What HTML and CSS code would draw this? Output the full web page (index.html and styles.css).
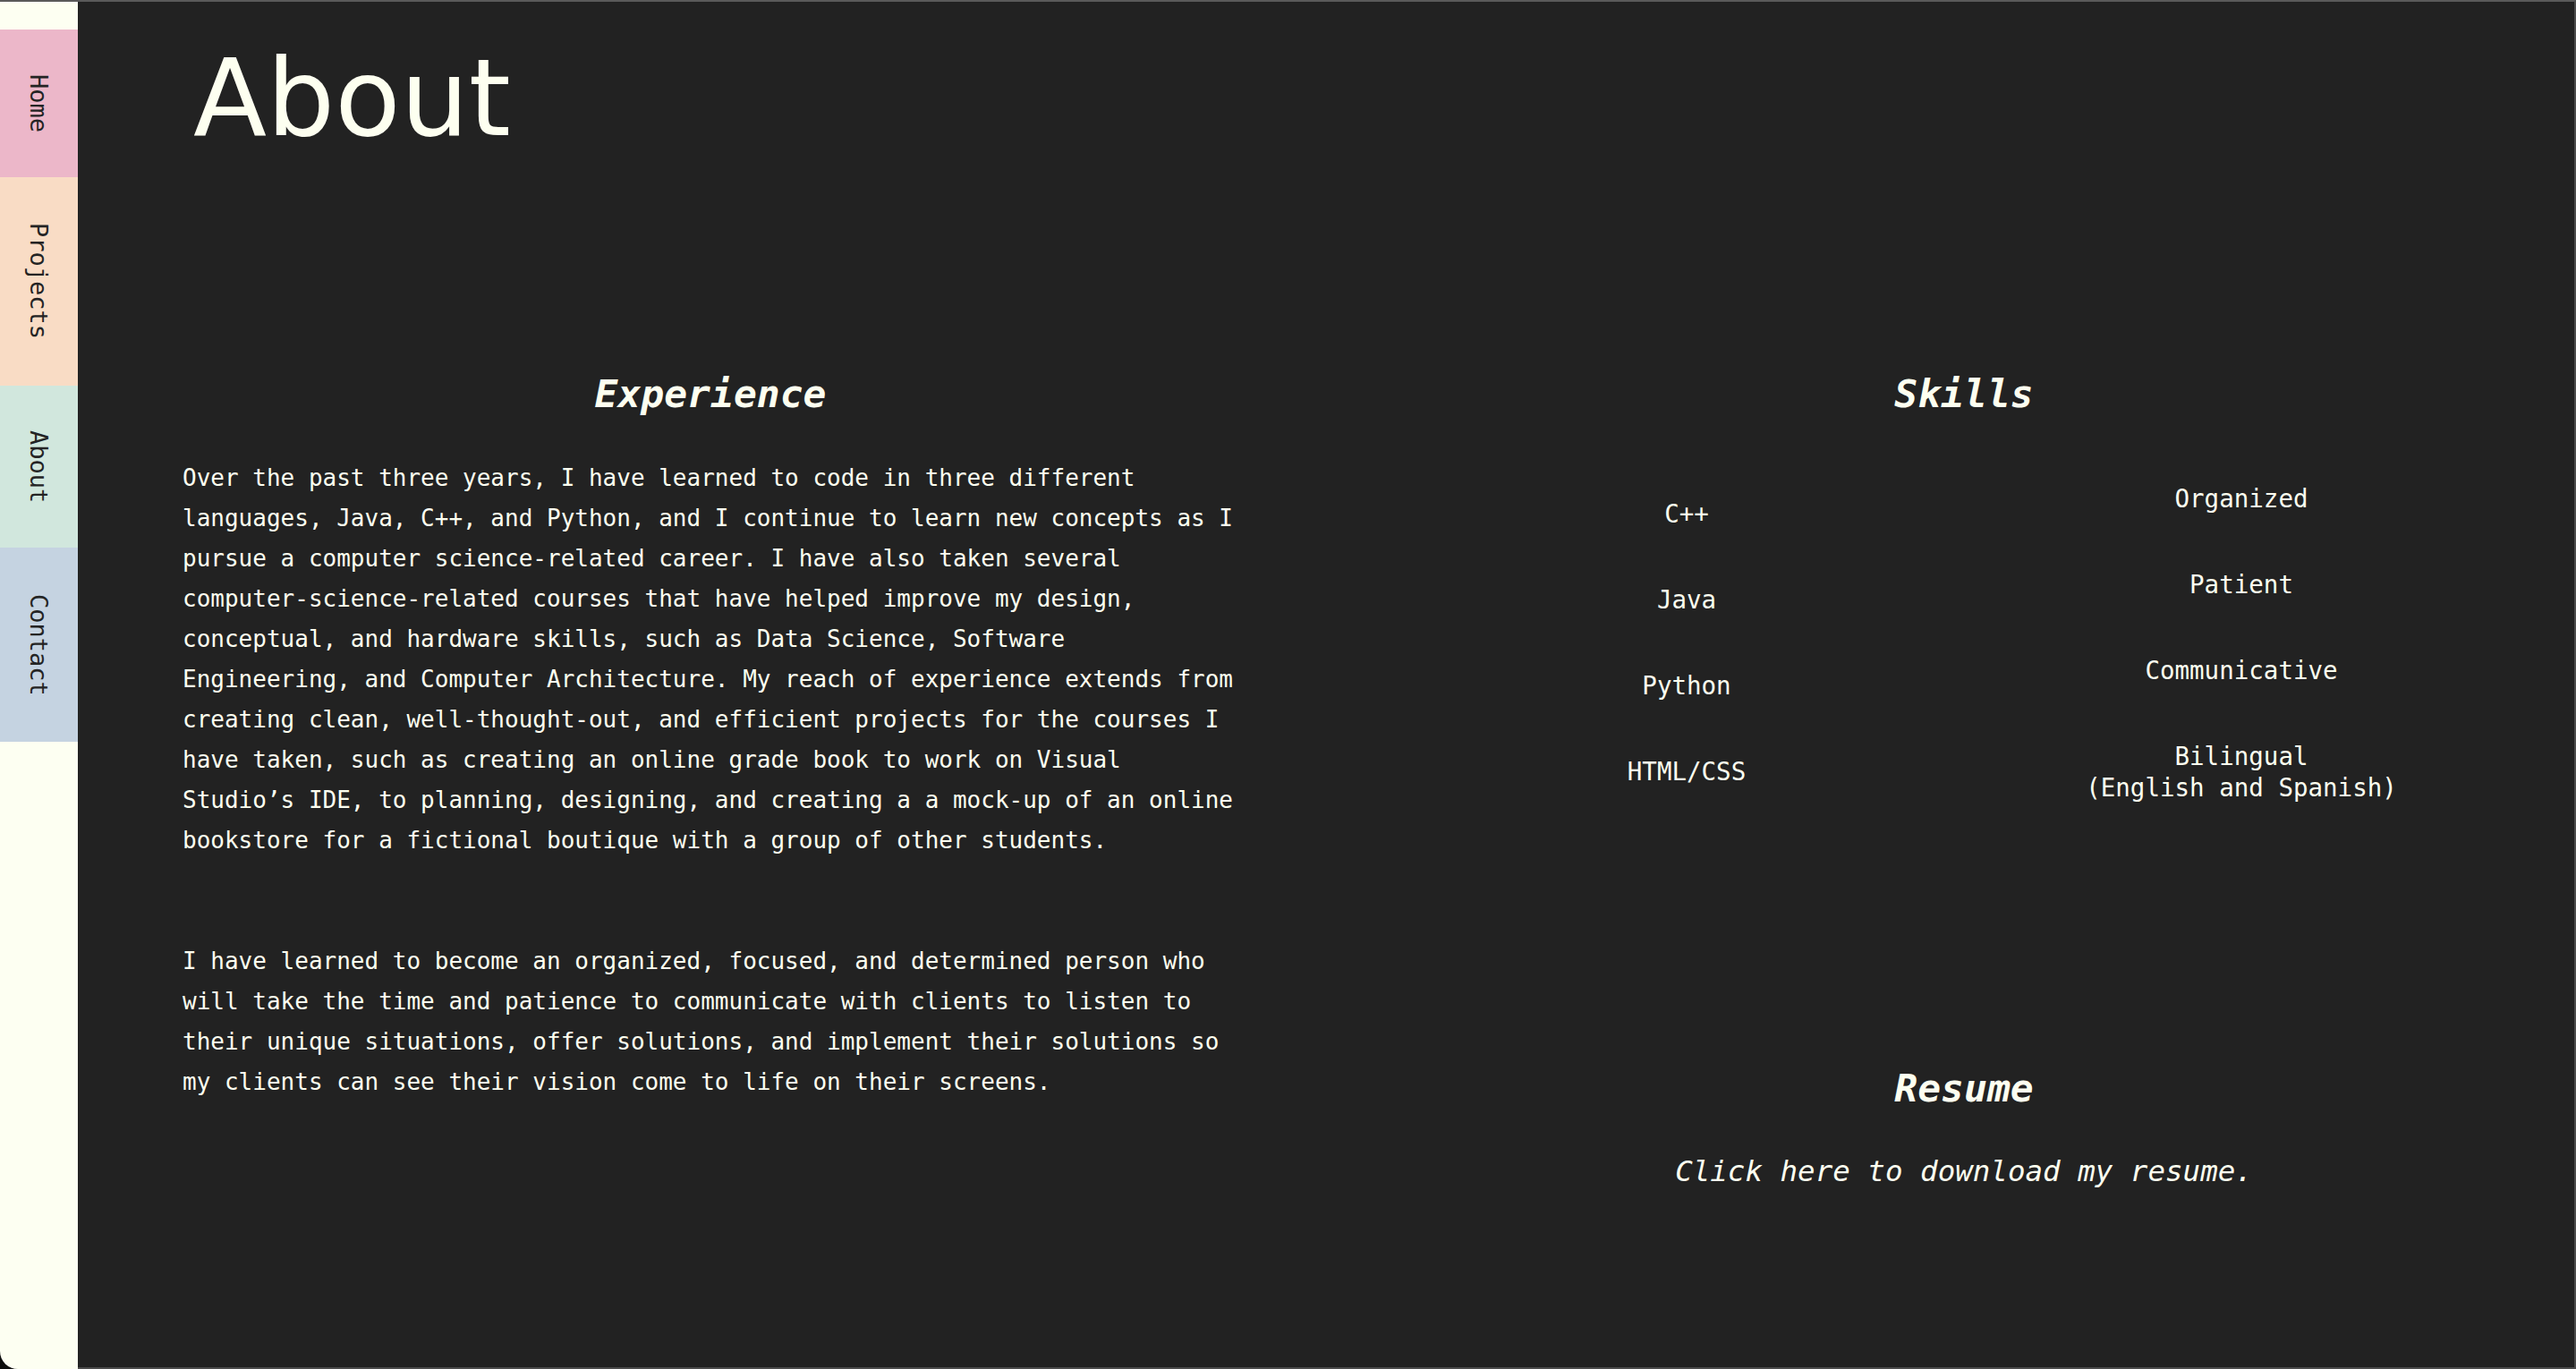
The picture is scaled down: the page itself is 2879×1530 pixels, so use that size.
FILE: index.html
```html
<!DOCTYPE html>
<html lang="en">
<head>
<meta charset="utf-8">
<title>About</title>
<link rel="stylesheet" href="styles.css">
</head>
<body>
<div class="window">
  <nav class="sidebar">
    <a class="tab tab-home" href="#">Home</a>
    <a class="tab tab-projects" href="#">Projects</a>
    <a class="tab tab-about" href="#">About</a>
    <a class="tab tab-contact" href="#">Contact</a>
  </nav>
  <main class="main">
    <h1 class="page-title">About</h1>
    <div class="columns">
      <section class="col">
        <h2 class="section-title">Experience</h2>
        <p class="text">Over the past three years, I have learned to code in three different languages, Java, C++, and Python, and I continue to learn new concepts as I pursue a computer science-related career. I have also taken several computer-science-related courses that have helped improve my design, conceptual, and hardware skills, such as Data Science, Software Engineering, and Computer Architecture. My reach of experience extends from creating clean, well-thought-out, and efficient projects for the courses I have taken, such as creating an online grade book to work on Visual Studio’s IDE, to planning, designing, and creating a a mock-up of an online bookstore for a fictional boutique with a group of other students.</p>
        <p class="text text-gap">I have learned to become an organized, focused, and determined person who will take the time and patience to communicate with clients to listen to their unique situations, offer solutions, and implement their solutions so my clients can see their vision come to life on their screens.</p>
      </section>
      <section class="col">
        <h2 class="section-title">Skills</h2>
        <div class="skills">
          <ul class="skill-list">
            <li>C++</li>
            <li>Java</li>
            <li>Python</li>
            <li>HTML/CSS</li>
          </ul>
          <ul class="skill-list">
            <li>Organized</li>
            <li>Patient</li>
            <li>Communicative</li>
            <li>Bilingual<br>(English and Spanish)</li>
          </ul>
        </div>
        <h2 class="section-title resume-title">Resume</h2>
        <a class="resume-link" href="#">Click here to download my resume.</a>
      </section>
    </div>
  </main>
</div>
</body>
</html>
```

FILE: styles.css
```css
html, body {
  margin: 0;
  padding: 0;
  background: #0d0d0d;
}

.window {
  box-sizing: border-box;
  width: 2879px;
  height: 1530px;
  display: flex;
  background: #222222;
  border-top: 2px solid #5a5a5a;
  border-right: 2px solid #4c4c4c;
  border-bottom-left-radius: 20px;
  overflow: hidden;
}

.sidebar {
  width: 87px;
  flex: none;
  background: #fdfff2;
  padding-top: 31px;
  display: flex;
  flex-direction: column;
}

.tab {
  display: flex;
  align-items: center;
  justify-content: center;
  writing-mode: vertical-rl;
  font-family: "DejaVu Sans Mono", monospace;
  font-size: 27px;
  color: #242424;
  text-decoration: none;
}

.tab-home { height: 165px; background: #ecb7c9; }
.tab-projects { height: 233px; background: #f9dcc5; }
.tab-about { height: 181px; background: #d1e7dd; }
.tab-contact { height: 217px; background: #c5d3e1; }

.main {
  flex: 1;
  box-sizing: border-box;
  padding: 0 92px 0 117px;
  border-bottom: 2px solid #4c4c4c;
  color: #fdfff0;
  font-family: "DejaVu Sans Mono", monospace;
}

.page-title {
  margin: 48px 0 0 12px;
  font-family: "DejaVu Sans", sans-serif;
  font-weight: 400;
  font-size: 120px;
  line-height: 1;
  color: #fdfff0;
}

.columns {
  margin-top: 245px;
  display: grid;
  grid-template-columns: 1180px 1180px;
  column-gap: 221px;
}

.col {
  display: flex;
  flex-direction: column;
  align-items: center;
}

.section-title {
  margin: 0;
  font-size: 43px;
  line-height: 1.2;
  font-style: italic;
  font-weight: 700;
  text-align: center;
}

.text {
  align-self: stretch;
  margin: 45px 0 0;
  font-size: 26px;
  line-height: 45px;
}

.text-gap {
  margin-top: 90px;
}

.skills {
  margin-top: 73px;
  align-self: stretch;
  display: grid;
  grid-template-columns: 1fr 1fr;
  column-gap: 60px;
  align-items: center;
}

.skill-list {
  list-style: none;
  margin: 0;
  padding: 0;
  display: flex;
  flex-direction: column;
  align-items: center;
  gap: 61px;
  font-size: 27.5px;
  line-height: 35px;
  text-align: center;
}

.resume-title {
  margin-top: 293px;
}

.resume-link {
  margin-top: 48px;
  font-size: 32.5px;
  line-height: 1.2;
  font-style: italic;
  color: #fdfff0;
  text-decoration: none;
}
```
